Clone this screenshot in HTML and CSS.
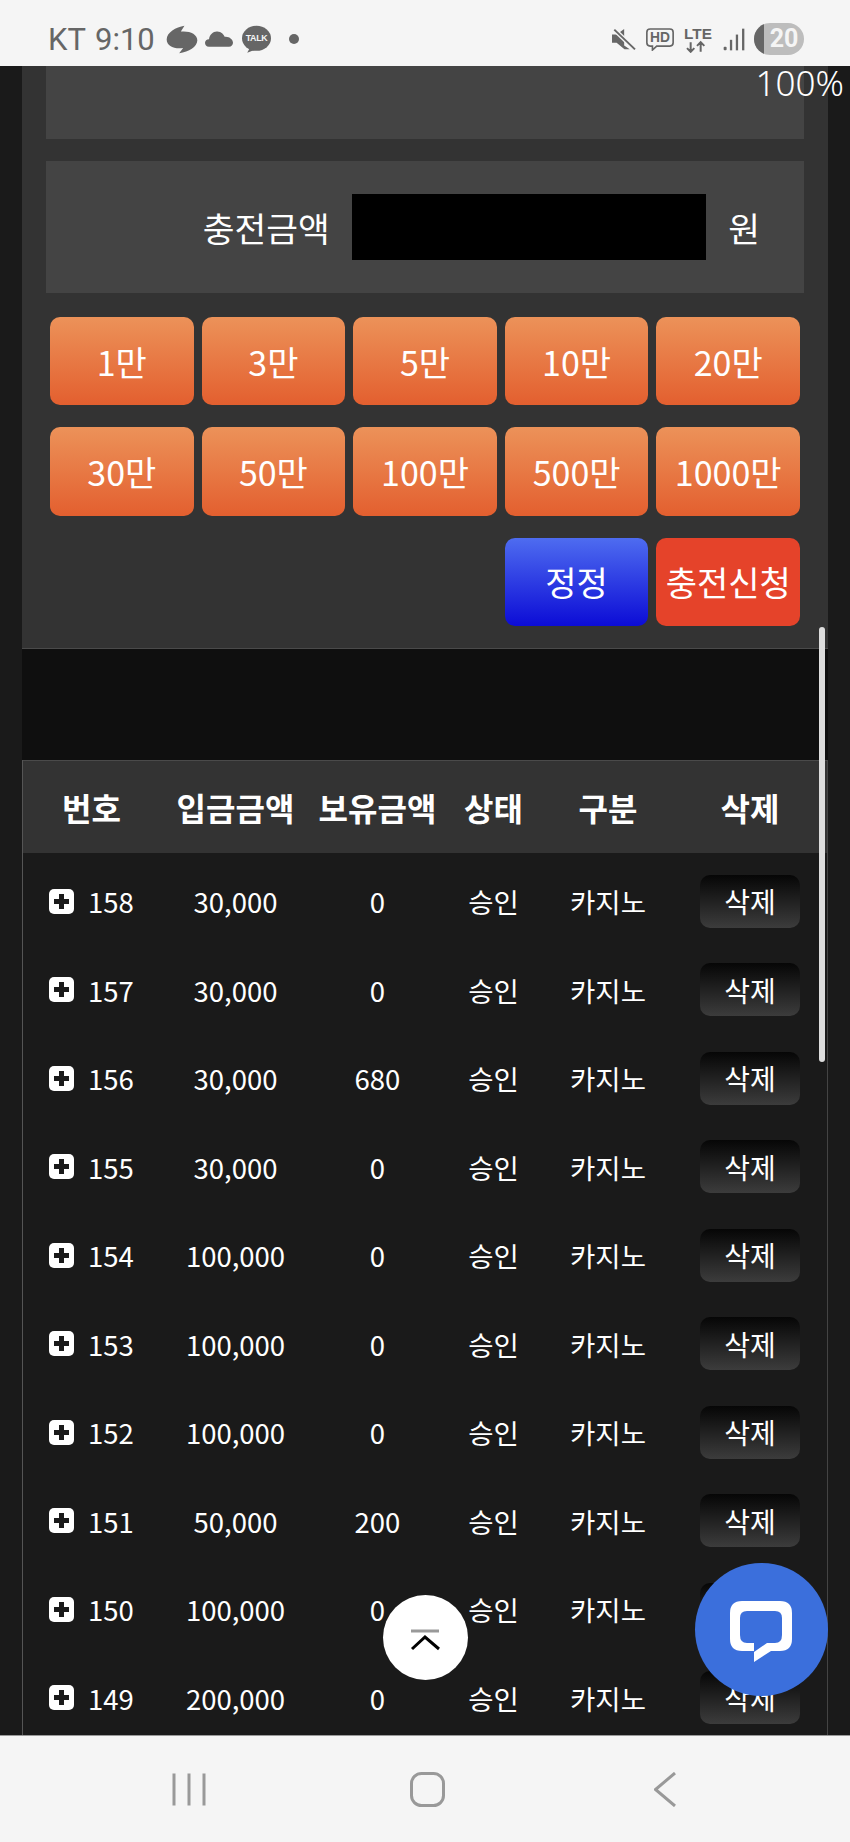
FILE: index.html
```html
<!DOCTYPE html>
<html lang="ko">
<head>
    <meta charset="UTF-8">
    <meta name="viewport" content="width=device-width, initial-scale=1.0">
    <title>충전신청</title>
    <link rel="stylesheet" href="styles.css">
</head>
<body>
    <header class="status-bar">
        <div class="status-left">
            <span class="carrier">KT</span>
            <span class="clock">9:10</span>
            <svg class="ic-swirl" viewBox="500 78 97 88"><path d="M556 80L545 98C570 95 596 105 595 125C594 145 570 158 540 164L552 148C525 152 502 142 502 122C502 100 530 84 556 80Z"/></svg>
            <svg class="ic-cloud" viewBox="618 95 84 47"><path d="M630 142C622 142 618 136 618 130C618 124 623 119 630 119C632 105 643 95 655 96C667 97 674 104 677 112C690 110 702 120 702 130C702 137 697 142 690 142Z"/></svg>
            <svg class="ic-talk" viewBox="727 78 88 84"><ellipse cx="771" cy="118" rx="44" ry="38"/><path d="M750 148L743 162L768 152Z"/><text x="771" y="127" class="talk-text">TALK</text></svg>
            <span class="dot"></span>
        </div>
        <div class="status-right">
            <svg class="ic-mute" viewBox="556 85 74 70"><path d="M558 105H572L595 88V138L612 150H596L572 130H558Z"/><path d="M565 90L628 150" class="slash-gap"/><path d="M565 90L628 150" class="slash"/></svg>
            <svg class="ic-hd" viewBox="663 87 84 70"><path d="M675 90H735Q745 90 745 100V132Q745 142 735 142H695L682 154V142H675Q665 142 665 132V100Q665 90 675 90Z" class="hd-box"/><text x="705" y="131" class="hd-text">HD</text></svg>
            <svg class="ic-lte" viewBox="773 80 90 80"><text x="818" y="117" class="lte-text">LTE</text><path d="M796 128V156M785 146L796 157L807 146M826 157V129M815 139L826 128L837 139" class="lte-arrows"/></svg>
            <svg class="ic-signal" viewBox="893 84 67 70"><rect x="895" y="141" width="9" height="11" rx="3"/><rect x="914" y="120" width="7" height="32"/><rect x="932" y="104" width="7" height="48"/><rect x="951" y="86" width="7" height="66"/></svg>
            <div class="battery"><span class="battery-used"></span><span class="battery-num">20</span></div>
        </div>
    </header>

    <main class="screen">
        <div class="wrap">
            <section class="charge-panel">
                <div class="box box-top"></div>
                <div class="box box-amount">
                    <label class="amount-label">충전금액</label>
                    <div class="amount-input"></div>
                    <span class="amount-unit">원</span>
                </div>
                <div class="btn-grid">
                    <button class="btn btn-orange">1만</button>
                    <button class="btn btn-orange">3만</button>
                    <button class="btn btn-orange">5만</button>
                    <button class="btn btn-orange">10만</button>
                    <button class="btn btn-orange">20만</button>
                    <button class="btn btn-orange">30만</button>
                    <button class="btn btn-orange">50만</button>
                    <button class="btn btn-orange">100만</button>
                    <button class="btn btn-orange">500만</button>
                    <button class="btn btn-orange">1000만</button>
                    <button class="btn btn-blue">정정</button>
                    <button class="btn btn-red">충전신청</button>
                </div>
            </section>

            <section class="history">
                <div class="row row-head">
                    <div>번호</div>
                    <div>입금금액</div>
                    <div>보유금액</div>
                    <div>상태</div>
                    <div>구분</div>
                    <div>삭제</div>
                </div>
                <div class="rows">
                    <div class="row"><div class="num"><span class="plus"></span>158</div><div>30,000</div><div>0</div><div>승인</div><div>카지노</div><div><button class="btn-del">삭제</button></div></div>
                    <div class="row"><div class="num"><span class="plus"></span>157</div><div>30,000</div><div>0</div><div>승인</div><div>카지노</div><div><button class="btn-del">삭제</button></div></div>
                    <div class="row"><div class="num"><span class="plus"></span>156</div><div>30,000</div><div>680</div><div>승인</div><div>카지노</div><div><button class="btn-del">삭제</button></div></div>
                    <div class="row"><div class="num"><span class="plus"></span>155</div><div>30,000</div><div>0</div><div>승인</div><div>카지노</div><div><button class="btn-del">삭제</button></div></div>
                    <div class="row"><div class="num"><span class="plus"></span>154</div><div>100,000</div><div>0</div><div>승인</div><div>카지노</div><div><button class="btn-del">삭제</button></div></div>
                    <div class="row"><div class="num"><span class="plus"></span>153</div><div>100,000</div><div>0</div><div>승인</div><div>카지노</div><div><button class="btn-del">삭제</button></div></div>
                    <div class="row"><div class="num"><span class="plus"></span>152</div><div>100,000</div><div>0</div><div>승인</div><div>카지노</div><div><button class="btn-del">삭제</button></div></div>
                    <div class="row"><div class="num"><span class="plus"></span>151</div><div>50,000</div><div>200</div><div>승인</div><div>카지노</div><div><button class="btn-del">삭제</button></div></div>
                    <div class="row"><div class="num"><span class="plus"></span>150</div><div>100,000</div><div>0</div><div>승인</div><div>카지노</div><div><button class="btn-del">삭제</button></div></div>
                    <div class="row"><div class="num"><span class="plus"></span>149</div><div>200,000</div><div>0</div><div>승인</div><div>카지노</div><div><button class="btn-del">삭제</button></div></div>
                </div>
            </section>
        </div>

        <!-- floating things over the page -->
        <div class="scrollbar"></div>
        <button class="to-top">
            <svg viewBox="0 0 85 85" class="to-top-icon"><path d="M28 36H56" class="to-top-line"/><path d="M29 54L42 42L56 54" class="to-top-arrow"/></svg>
        </button>
        <button class="chat">
            <svg viewBox="0 0 133 133" class="chat-icon"><path fill-rule="evenodd" d="M47 38H85Q97 38 97 50V76Q97 88 85 88H76L59 99V88H47Q35 88 35 76V50Q35 38 47 38ZM52 48Q45 48 45 55V72Q45 80 52 80H59V89L72 80H80Q87 80 87 72V55Q87 48 80 48Z"/></svg>
        </button>
    </main>
    <div class="zoom-level">100%</div>

    <nav class="nav-bar">
        <div class="nav-item">
            <svg class="nav-icon" viewBox="0 0 34 35"><path d="M2 1.5V33.5M17 1.5V33.5M32 1.5V33.5"/></svg>
        </div>
        <div class="nav-item">
            <svg class="nav-icon" viewBox="0 0 35 35"><rect x="1.5" y="1.5" width="32" height="32" rx="10"/></svg>
        </div>
        <div class="nav-item">
            <svg class="nav-icon" viewBox="0 0 22 35"><path d="M21 1L1.5 17.5L21 34"/></svg>
        </div>
    </nav>
</body>
</html>
```

FILE: styles.css
```css
html, body {
    margin: 0;
    padding: 0;
}
body {
    position: relative;
    width: 850px;
    height: 1842px;
    overflow: hidden;
    display: flex;
    flex-direction: column;
    background-color: #1a1a1a;
    color: #fff;
    font-family: "Noto Sans CJK KR", "Noto Sans", sans-serif;
}
button {
    font-family: inherit;
    border: none;
    padding: 0;
    color: #fff;
}

/* status bar */
.status-bar {
    flex: 0 0 66px;
    box-sizing: border-box;
    display: flex;
    justify-content: space-between;
    align-items: center;
    padding: 0 46px 0 48px;
    background-color: #f5f5f5;
    color: #666;
    font-family: Roboto, sans-serif;
    font-size: 31px;
}
.status-bar svg {
    display: block;
    fill: #666;
}
.status-left, .status-right {
    display: flex;
    align-items: center;
    margin-top: 12px;
    height: 32px;
}
.clock {
    margin-left: 9px;
}
.ic-swirl {
    width: 32px;
    height: 29px;
    margin-left: 11px;
}
.ic-cloud {
    width: 28px;
    height: 16px;
    margin-left: 7px;
}
.ic-talk {
    width: 29px;
    height: 28px;
    margin-left: 9px;
}
.talk-text {
    fill: #f5f5f5;
    font-family: "Liberation Sans", sans-serif;
    font-weight: 700;
    font-size: 27px;
    letter-spacing: -1px;
    text-anchor: middle;
}
.dot {
    width: 10px;
    height: 10px;
    margin-left: 18px;
    border-radius: 50%;
    background-color: #666;
}
.ic-mute {
    width: 25px;
    height: 23px;
}
.slash-gap {
    fill: none;
    stroke: #f5f5f5;
    stroke-width: 14;
}
.slash {
    fill: none;
    stroke: #666;
    stroke-width: 6;
}
.ic-hd {
    width: 28px;
    height: 23px;
    margin-left: 10px;
}
.hd-box {
    fill: none;
    stroke: #666;
    stroke-width: 5;
}
.hd-text {
    fill: #666;
    font-family: "Liberation Sans", sans-serif;
    font-weight: 700;
    font-size: 42px;
    text-anchor: middle;
}
.ic-lte {
    width: 30px;
    height: 27px;
    margin-left: 9px;
}
.lte-text {
    fill: #666;
    font-family: "Liberation Sans", sans-serif;
    font-weight: 700;
    font-size: 46px;
    text-anchor: middle;
}
.lte-arrows {
    fill: none;
    stroke: #666;
    stroke-width: 6;
}
.ic-signal {
    width: 22px;
    height: 23px;
    margin-left: 10px;
}
.battery {
    position: relative;
    width: 50px;
    height: 32px;
    margin-left: 9px;
    border-radius: 16px;
    overflow: hidden;
    background-color: #bdbdbd;
}
.battery-used {
    display: block;
    width: 10px;
    height: 100%;
    background-color: #666;
}
.battery-num {
    position: absolute;
    left: 10px;
    right: 0;
    top: 0;
    line-height: 32px;
    text-align: center;
    color: #f5f5f5;
    font-weight: 700;
    font-size: 25px;
}

/* page */
.screen {
    position: relative;
    flex: 1;
    overflow: hidden;
}
.wrap {
    margin: 0 22px;
    height: 100%;
    background-color: #0f0f0f;
}
.charge-panel {
    box-sizing: border-box;
    height: 583px;
    padding: 0 24px;
    background-color: #333;
    border-bottom: 1px solid #4a4a4a;
}
.box {
    background-color: #444;
}
.box-top {
    height: 73px;
    margin-bottom: 22px;
}
.box-amount {
    height: 132px;
    margin-bottom: 24px;
    padding-right: 44px;
    display: flex;
    justify-content: flex-end;
    align-items: center;
}
.amount-label, .amount-unit {
    font-size: 34.5px;
}
.amount-input {
    width: 354px;
    height: 66px;
    margin: 0 22.5px 0 22px;
    background-color: #000;
}
.btn-grid {
    display: grid;
    grid-template-columns: repeat(5, 1fr);
    grid-auto-rows: 88.4px;
    gap: 22px 8px;
    margin: 0 4px;
}
.btn {
    border-radius: 10px;
    font-size: 34px;
}
.btn-orange {
    background: linear-gradient(to bottom, #ec9259, #e35f2f);
}
.btn-blue {
    grid-column: 4;
    background: linear-gradient(to bottom, #4e6cf0, #0c0cd6);
}
.btn-red {
    background-color: #e5432a;
}

/* history table */
.history {
    margin-top: 111px;
    height: 100%;
    background-color: #1a1a1a;
    border-left: 1px solid #555;
    border-right: 1px solid #444;
}
.row {
    display: grid;
    grid-template-columns: 137px 151px 133px 99px 130px 1fr;
    height: 88.5px;
    text-align: center;
    font-size: 27.5px;
}
.row > div {
    display: flex;
    justify-content: center;
    align-items: center;
}
.row-head {
    height: 93px;
    box-sizing: border-box;
    background-color: #333;
    border-top: 1px solid #4a4a4a;
    font-size: 32px;
    font-weight: 700;
}
.rows {
    padding-top: 4px;
}
.row > .num {
    justify-content: flex-start;
    padding-left: 26px;
}
.plus {
    position: relative;
    width: 25px;
    height: 25px;
    margin-right: 14px;
    border-radius: 5px;
    background-color: #fff;
}
.plus::before, .plus::after {
    content: "";
    position: absolute;
    background-color: #1a1a1a;
}
.plus::before {
    left: 5px;
    top: 10px;
    width: 15px;
    height: 5px;
}
.plus::after {
    left: 10px;
    top: 5px;
    width: 5px;
    height: 15px;
}
.btn-del {
    width: 100px;
    height: 53px;
    border-radius: 10px;
    background: linear-gradient(to bottom, #060606, #3c3c3c);
    font-size: 28px;
}

/* overlays */
.zoom-level {
    position: absolute;
    top: 66px;
    right: 6px;
    font-family: "Noto Sans", sans-serif;
    font-size: 35px;
    font-weight: 300;
    line-height: 33px;
}
.scrollbar {
    position: absolute;
    left: 819px;
    top: 561px;
    width: 6px;
    height: 435px;
    border-radius: 3px;
    background-color: #ddd;
}
.to-top {
    position: absolute;
    left: 383px;
    top: 1529px;
    width: 85px;
    height: 85px;
    border-radius: 50%;
    background-color: #fff;
}
.to-top-icon, .chat-icon {
    display: block;
    width: 100%;
    height: 100%;
}
.to-top-line {
    fill: none;
    stroke: #999;
    stroke-width: 3;
}
.to-top-arrow {
    fill: none;
    stroke: #000;
    stroke-width: 3;
}
.chat {
    position: absolute;
    left: 695px;
    top: 1497px;
    width: 133px;
    height: 133px;
    border-radius: 50%;
    background-color: #3b6fdc;
}
.chat-icon {
    fill: #fff;
}

/* bottom nav */
.nav-bar {
    flex: 0 0 107px;
    box-sizing: border-box;
    display: grid;
    grid-template-columns: repeat(3, 238px);
    justify-content: center;
    align-items: center;
    padding-left: 4px;
    background-color: #f5f5f5;
    border-top: 1px solid #999;
}
.nav-item {
    display: flex;
    justify-content: center;
}
.nav-icon {
    height: 35px;
    fill: none;
    stroke: #999;
    stroke-width: 3;
}
```
